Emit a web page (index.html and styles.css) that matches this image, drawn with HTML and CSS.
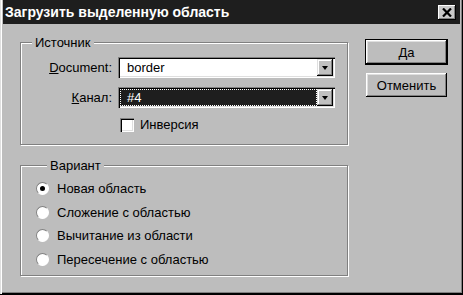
FILE: index.html
```html
<!DOCTYPE html>
<html lang="ru">
<head>
    <meta charset="UTF-8">
    <meta name="viewport" content="width=device-width, initial-scale=1.0">
    <title>Загрузить выделенную область</title>
    <link rel="stylesheet" href="styles.css">
</head>
<body>
    <div class="window">
        <div class="titlebar">
            <span class="title">Загрузить выделенную область</span>
            <span class="close-btn">
                <svg width="10" height="9" viewBox="0 0 10 9">
                    <path d="M1 0.5 L9 8.5 M9 0.5 L1 8.5" stroke="#000" stroke-width="2.2" fill="none"/>
                </svg>
            </span>
        </div>

        <div class="content">
            <div class="groups">
                <fieldset class="group group-source">
                    <legend>Источник</legend>
                    <div class="source-grid">
                        <label class="field-label"><u>D</u>ocument:</label>
                        <div class="combo">
                            <span class="combo-value">border</span>
                            <span class="combo-arrow"><span class="tri"></span></span>
                        </div>

                        <label class="field-label"><u>К</u>анал:</label>
                        <div class="combo combo-focused">
                            <span class="combo-value">#4</span>
                            <span class="combo-arrow"><span class="tri"></span></span>
                        </div>

                        <span></span>
                        <label class="check">
                            <span class="check-box"></span>
                            Инверсия
                        </label>
                    </div>
                </fieldset>

                <fieldset class="group group-variant">
                    <legend>Вариант</legend>
                    <ul class="radio-list">
                        <li><span class="radio checked"></span>Новая область</li>
                        <li><span class="radio"></span>Сложение с областью</li>
                        <li><span class="radio"></span>Вычитание из области</li>
                        <li><span class="radio"></span>Пересечение с областью</li>
                    </ul>
                </fieldset>
            </div>

            <div class="buttons">
                <button class="btn btn-default">Да</button>
                <button class="btn">Отменить</button>
            </div>
        </div>
    </div>
</body>
</html>
```

FILE: styles.css
```css
body {
    margin: 0;
    background: #bdbdbd;
    font-family: "Liberation Sans", Arial, sans-serif;
    font-size: 13px;
    color: #000;
}
.window {
    width: 463px;
    height: 295px;
    box-sizing: border-box;
    padding: 0 3px 3px 3px;
    background: #bdbdbd;
    box-shadow: inset 1px 0 0 #dfdfdf, inset 2px 0 0 #fff,
                inset -1px -1px 0 #000, inset -2px -2px 0 #808080;
    border-bottom: 1px solid #000;
}
.titlebar {
    height: 24px;
    background: #1e1e1e;
    color: #fff;
    display: flex;
    align-items: center;
    justify-content: space-between;
    padding: 0 4px 0 2px;
}
.title {
    font-weight: bold;
    font-size: 14px;
}
.close-btn {
    width: 18px;
    height: 15px;
    box-sizing: border-box;
    background: #c8c8c8;
    display: flex;
    align-items: center;
    justify-content: center;
    box-shadow: inset -1px -1px 0 #000, inset 1px 1px 0 #fff, inset -2px -2px 0 #808080;
}
.content {
    display: flex;
    padding: 11px 0 0 17px;
}
.groups {
    width: 328px;
}
.group {
    margin: 0;
    padding: 0;
    min-width: 0;
    border: 1px solid #808080;
    box-shadow: 1px 1px 0 #fff, inset 1px 1px 0 #fff;
}
.group legend {
    margin-left: 11px;
    padding: 0 3px;
    line-height: 15px;
    background: #bdbdbd;
}
.group-source {
    padding: 7px 0 12px 0;
}
.group-variant {
    margin-top: 13px;
    padding: 4px 0 4px 15px;
}
.source-grid {
    display: grid;
    grid-template-columns: 91px 217px;
    column-gap: 6px;
    row-gap: 9px;
    align-items: center;
}
.field-label {
    text-align: right;
}
.combo {
    height: 21px;
    box-sizing: border-box;
    background: #fff;
    display: flex;
    padding: 2px;
    box-shadow: inset 1px 1px 0 #808080, inset 2px 2px 0 #000,
                inset -1px -1px 0 #fff, inset -2px -2px 0 #dfdfdf;
}
.combo-value {
    flex: 1;
    padding-left: 7px;
    line-height: 17px;
}
.combo-focused .combo-value {
    background: #1e1e1e;
    color: #fff;
    outline: 1px dotted #fff;
    outline-offset: -1px;
}
.combo-arrow {
    width: 16px;
    height: 17px;
    box-sizing: border-box;
    background: #c0c0c0;
    display: flex;
    align-items: center;
    justify-content: center;
    box-shadow: inset -1px -1px 0 #000, inset 1px 1px 0 #dfdfdf,
                inset -2px -2px 0 #808080, inset 2px 2px 0 #fff;
}
.tri {
    width: 0;
    height: 0;
    border-left: 3.5px solid transparent;
    border-right: 3.5px solid transparent;
    border-top: 4px solid #000;
}
.check {
    display: flex;
    align-items: center;
    gap: 6px;
    margin-left: 2px;
}
.check-box {
    width: 14px;
    height: 14px;
    box-sizing: border-box;
    background: #fff;
    box-shadow: inset 1px 1px 0 #808080, inset 2px 2px 0 #000,
                inset -1px -1px 0 #fff, inset -2px -2px 0 #dfdfdf;
}
.radio-list {
    list-style: none;
    margin: 0;
    padding: 0;
}
.radio-list li {
    height: 23.5px;
    display: flex;
    align-items: center;
    gap: 8px;
}
.radio {
    width: 13px;
    height: 13px;
    box-sizing: border-box;
    border-radius: 50%;
    background: #fff;
    border: 1px solid;
    border-color: #808080 #fff #fff #808080;
    position: relative;
}
.radio.checked::after {
    content: "";
    position: absolute;
    left: 3px;
    top: 3px;
    width: 5px;
    height: 5px;
    border-radius: 50%;
    background: #000;
}
.buttons {
    margin-left: 18px;
    margin-top: 5px;
    display: flex;
    flex-direction: column;
    gap: 9px;
}
.btn {
    width: 81px;
    height: 24px;
    font-family: inherit;
    font-size: 13px;
    background: #bdbdbd;
    border: none;
    padding: 0;
    box-shadow: inset -1px -1px 0 #000, inset 1px 1px 0 #fff,
                inset -2px -2px 0 #808080, inset 2px 2px 0 #dfdfdf;
}
.btn-default {
    outline: 1px solid #000;
}
```
